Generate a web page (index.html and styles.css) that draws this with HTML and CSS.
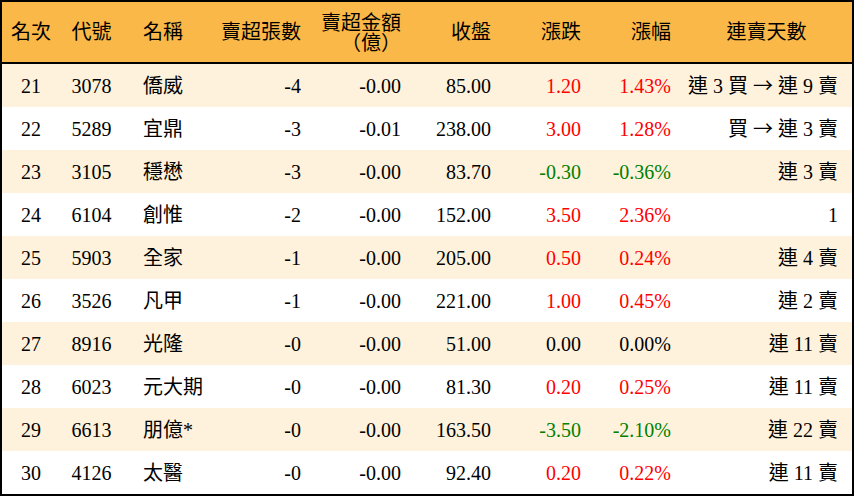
FILE: index.html
```html
<!DOCTYPE html>
<html lang="zh-Hant">
<head>
<meta charset="utf-8">
<title>連賣排行</title>
<link rel="stylesheet" href="styles.css">
</head>
<body>
<div class="board">
  <div class="row head">
    <div class="c ctr">名次</div>
    <div class="c ctr">代號</div>
    <div class="c name">名稱</div>
    <div class="c num">賣超張數</div>
    <div class="c num two">賣超金額<br>（億）</div>
    <div class="c num">收盤</div>
    <div class="c num">漲跌</div>
    <div class="c num">漲幅</div>
    <div class="c ctr">連賣天數</div>
  </div>
  <div class="row alt">
    <div class="c ctr">21</div><div class="c ctr">3078</div><div class="c name">僑威</div>
    <div class="c num">-4</div><div class="c num">-0.00</div><div class="c num">85.00</div>
    <div class="c num up">1.20</div><div class="c num up">1.43%</div><div class="c days">連 3 買 <span class="arrow">→</span> 連 9 賣</div>
  </div>
  <div class="row">
    <div class="c ctr">22</div><div class="c ctr">5289</div><div class="c name">宜鼎</div>
    <div class="c num">-3</div><div class="c num">-0.01</div><div class="c num">238.00</div>
    <div class="c num up">3.00</div><div class="c num up">1.28%</div><div class="c days">買 <span class="arrow">→</span> 連 3 賣</div>
  </div>
  <div class="row alt">
    <div class="c ctr">23</div><div class="c ctr">3105</div><div class="c name">穩懋</div>
    <div class="c num">-3</div><div class="c num">-0.00</div><div class="c num">83.70</div>
    <div class="c num down">-0.30</div><div class="c num down">-0.36%</div><div class="c days">連 3 賣</div>
  </div>
  <div class="row">
    <div class="c ctr">24</div><div class="c ctr">6104</div><div class="c name">創惟</div>
    <div class="c num">-2</div><div class="c num">-0.00</div><div class="c num">152.00</div>
    <div class="c num up">3.50</div><div class="c num up">2.36%</div><div class="c days">1</div>
  </div>
  <div class="row alt">
    <div class="c ctr">25</div><div class="c ctr">5903</div><div class="c name">全家</div>
    <div class="c num">-1</div><div class="c num">-0.00</div><div class="c num">205.00</div>
    <div class="c num up">0.50</div><div class="c num up">0.24%</div><div class="c days">連 4 賣</div>
  </div>
  <div class="row">
    <div class="c ctr">26</div><div class="c ctr">3526</div><div class="c name">凡甲</div>
    <div class="c num">-1</div><div class="c num">-0.00</div><div class="c num">221.00</div>
    <div class="c num up">1.00</div><div class="c num up">0.45%</div><div class="c days">連 2 賣</div>
  </div>
  <div class="row alt">
    <div class="c ctr">27</div><div class="c ctr">8916</div><div class="c name">光隆</div>
    <div class="c num">-0</div><div class="c num">-0.00</div><div class="c num">51.00</div>
    <div class="c num">0.00</div><div class="c num">0.00%</div><div class="c days">連 11 賣</div>
  </div>
  <div class="row">
    <div class="c ctr">28</div><div class="c ctr">6023</div><div class="c name">元大期</div>
    <div class="c num">-0</div><div class="c num">-0.00</div><div class="c num">81.30</div>
    <div class="c num up">0.20</div><div class="c num up">0.25%</div><div class="c days">連 11 賣</div>
  </div>
  <div class="row alt">
    <div class="c ctr">29</div><div class="c ctr">6613</div><div class="c name">朋億*</div>
    <div class="c num">-0</div><div class="c num">-0.00</div><div class="c num">163.50</div>
    <div class="c num down">-3.50</div><div class="c num down">-2.10%</div><div class="c days">連 22 賣</div>
  </div>
  <div class="row">
    <div class="c ctr">30</div><div class="c ctr">4126</div><div class="c name">太醫</div>
    <div class="c num">-0</div><div class="c num">-0.00</div><div class="c num">92.40</div>
    <div class="c num up">0.20</div><div class="c num up">0.22%</div><div class="c days">連 11 賣</div>
  </div>
</div>
</body>
</html>
```
FILE: styles.css
```css
html, body {
  margin: 0;
  padding: 0;
  background: #ffffff;
}
.board {
  width: 854px;
  height: 496px;
  box-sizing: border-box;
  border: 2px solid #000;
  font-family: "Liberation Serif", "Noto Sans CJK TC", serif;
  font-size: 20px;
  color: #000;
  background: #fff;
}
.row {
  display: grid;
  grid-template-columns: 58px 63px 98px 90px 100px 90px 90px 90px 1fr;
  align-items: center;
  height: 43px;
  background: #ffffff;
  white-space: nowrap;
}
.row.alt {
  background: #fef2dd;
}
.row.head {
  height: 60px;
  background: #fab848;
  border-bottom: 2px solid #000;
}
.c {
  line-height: 22px;
}
.ctr {
  text-align: center;
}
.name {
  text-align: left;
  padding-left: 20px;
}
.num {
  text-align: right;
  padding-right: 10px;
}
.two {
  line-height: 20px;
  padding-top: 1px;
}
.days {
  text-align: right;
  padding-right: 14px;
}
.arrow {
  font-family: "Noto Sans CJK TC", sans-serif;
  font-size: 20px;
}
.up {
  color: #ff0000;
}
.down {
  color: #008000;
}
```
